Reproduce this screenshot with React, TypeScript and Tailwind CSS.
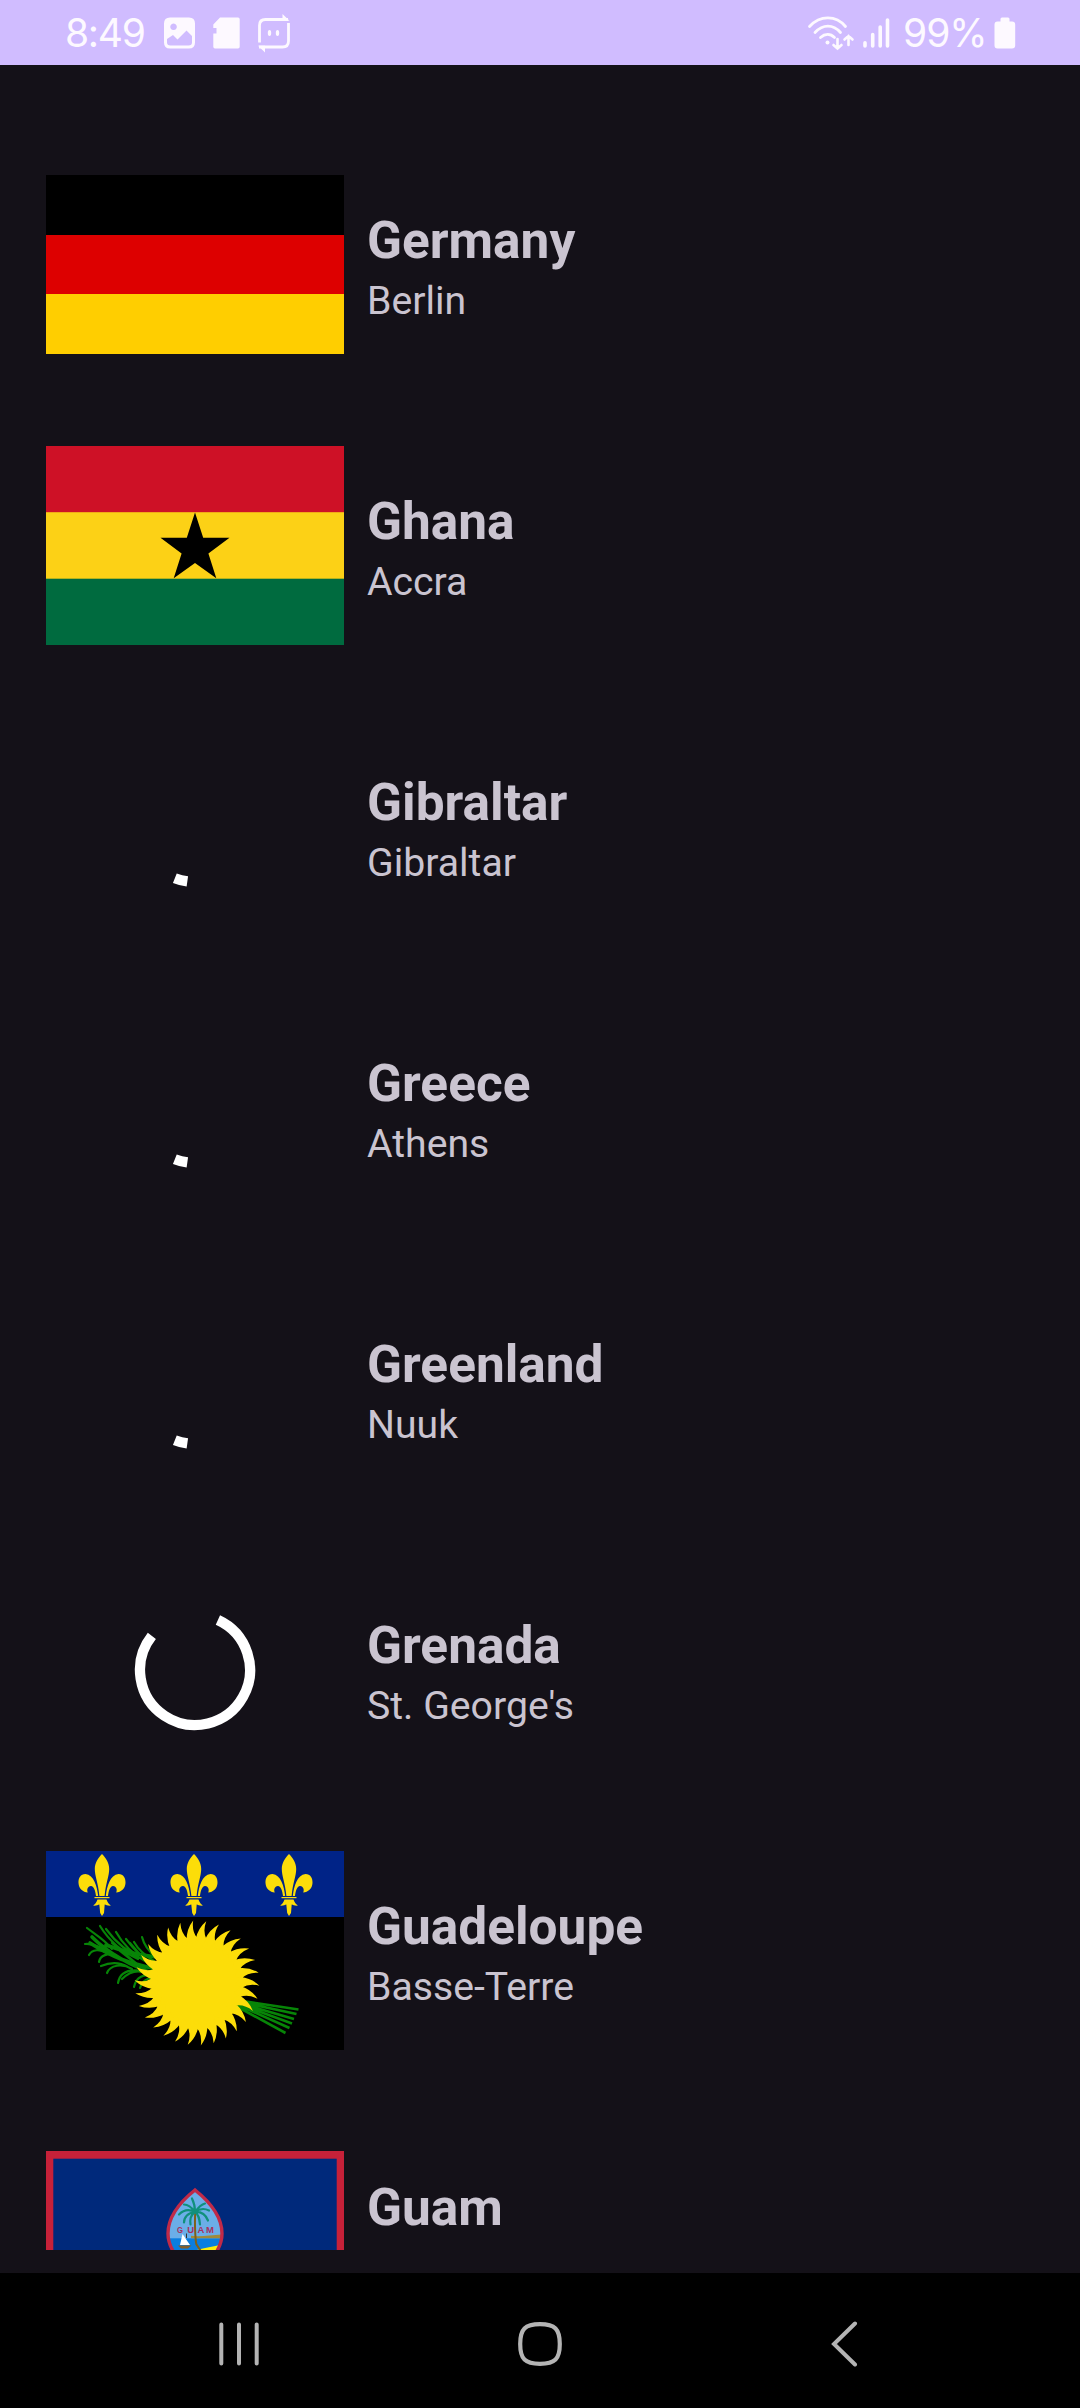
import type { ReactNode } from "react";

const SUN_CENTER = { x: 151, y: 132 };

function polar(r: number, deg: number, cx = 0, cy = 0) {
  const a = (deg * Math.PI) / 180;
  return `${(cx + r * Math.cos(a)).toFixed(2)} ${(cy + r * Math.sin(a)).toFixed(2)}`;
}

// Curved flame rays around the sun disc, tips leaning clockwise.
function sunPath() {
  const n = 30;
  const step = 360 / n;
  const { x, y } = SUN_CENTER;
  let d = "";
  for (let i = 0; i < n; i++) {
    const a = -93.5 + i * step;
    d += `M${polar(44, a - step * 0.85, x, y)} Q${polar(55, a - step * 0.62, x, y)} ${polar(62.5, a, x, y)} Q${polar(52, a - step * 0.2, x, y)} ${polar(45, a + step * 0.3, x, y)} L${polar(38, a, x, y)} Z `;
  }
  return d;
}

function Germany() {
  return (
    <div className="flex h-[179px] w-full flex-col">
      <div className="flex-1 bg-black" />
      <div className="flex-1 bg-[#dd0000]" />
      <div className="flex-1 bg-[#ffce00]" />
    </div>
  );
}

function Ghana() {
  return (
    <svg viewBox="0 0 298 199" className="block h-[199px] w-full">
      <rect width="298" height="199" fill="#006b3f" />
      <rect width="298" height="132.7" fill="#fcd116" />
      <rect width="298" height="66.2" fill="#ce1126" />
      <path d="M149 66.5 157.2 91.8H183.5L162.4 107.4 170.3 132.3 149 117 127.7 132.3 135.6 107.4 114.5 91.8H140.8Z" fill="#000" />
    </svg>
  );
}

function Lily({ x }: { x: number }) {
  return (
    <g transform={`translate(${x} 0)`} fill="#fcdd09">
      <path d="M0 3C-4 7-7.2 12-7.2 18-7.200 25-4 31-2.600 45H2.600C4 31 7.200 25 7.200 18 7.200 12 4 7 0 3Z" />
      <path d="M-3.800 45C-5 35-8 24-16.500 23-21.500 23-23.800 27-23.500 32-23.200 38-19 41-14.200 41.500-15.800 38-13.500 34.800-11 35-8 35.500-6.500 40-6 45Z" />
      <path d="M3.800 45C5 35 8 24 16.500 23 21.500 23 23.800 27 23.500 32 23.200 38 19 41 14.200 41.500 15.800 38 13.500 34.800 11 35 8 35.500 6.500 40 6 45Z" />
      <path d="M-7.500 46H7.500V47.200H-7.500Z" />
      <path d="M-4.500 48.500H4.500C5.500 51.500 7 53.500 9 54.600 6 55 4 54 2.700 53.500L2 62 0 65-1.800 62-2.700 53.500C-4 54-6 55-9 54.600-7 53.500-5.500 51.500-4.500 48.500Z" />
    </g>
  );
}

function Guadeloupe() {
  return (
    <svg viewBox="0 0 298 199" className="block h-[199px] w-full">
      <rect width="298" height="199" fill="#000" />
      <rect width="298" height="66" fill="#002387" />
      <Lily x={56} />
      <Lily x={148} />
      <Lily x={243} />
      <g fill="none" stroke="#078507" strokeLinecap="round">
        <path strokeWidth="2.600" strokeLinecap="butt" d="M190 149 252.500 158.500M190 150 250.500 163M190 151 248 168M190 152 246 172.500M190 153 243.500 177M190 155 239.500 182" />
        <path strokeWidth="3.600" d="M46 86C62 102 82 114 112 124M44 92C66 106 82 112 110 118M60 94C76 100 92 104 110 106" />
        <path strokeWidth="2.200" d="M54 75C62 88 74 100 92 108M60 78C70 92 82 102 100 110M70 81C76 92 88 104 102 112M80 88C86 96 94 106 106 112M88 91C92 98 98 104 108 110M96 86C98 94 102 100 110 106M41 77C50 84 58 88 66 98M39 93C48 92 58 98 66 104M43 104C46 98 54 98 62 102M53 111C54 104 62 102 70 104M55 115C62 112 72 110 82 116M61 122C64 114 76 112 86 118M72 132C74 120 84 118 96 120M76 128C84 120 94 118 104 124M88 136C90 126 98 122 108 126M94 137C96 130 102 126 108 128M84 92 98 108M74 100 94 116M66 92 90 112M70 106 98 118" />
      </g>
      <circle cx={SUN_CENTER.x} cy={SUN_CENTER.y} r="45" fill="#fcdd09" />
      <path d={sunPath()} fill="#fcdd09" />
    </svg>
  );
}

function Guam() {
  return (
    <svg viewBox="0 0 298 161" className="block h-[161px] w-full">
      <rect width="298" height="161" fill="#c62139" />
      <rect x="7.300" y="7.700" width="283.400" height="145.600" fill="#00297b" />
      <clipPath id="seal">
        <path d="M149 39C164 51 176 66 176 82.500S162 114 149 123C136 114 122 99 122 82.500S134 51 149 39Z" />
      </clipPath>
      <g clipPath="url(#seal)">
        <rect x="115" y="34" width="70" height="60" fill="#6baee8" />
        <rect x="115" y="87.300" width="70" height="40" fill="#0a7ee0" />
        <path d="M145 87.300V84.800C155 86 166 84 178 83.500V87.300Z" fill="#a08a3c" />
        <path d="M146 100.500C156 97 166 96.500 178 93V130H140Z" fill="#fdee0b" />
      </g>
      <path d="M149 39C164 51 176 66 176 82.500S162 114 149 123C136 114 122 99 122 82.500S134 51 149 39Z" fill="none" stroke="#c02a48" strokeWidth="3.400" />
      <path d="M149.300 61C148.500 72 149.300 88 150.300 93L156 102" fill="none" stroke="#806018" strokeWidth="2" />
      <path d="M149 61C142 57.500 137 59.500 133 63.500M149 61C142 61.500 138 66.500 138 71.500M149 61C144 64.500 144 68.500 144.500 73.500M149 61C153 63.500 153.500 68.500 154 73.500M149 61C157 60.500 160 64.500 162 69.500M149 61C155 56.500 159 57.500 163 59.500M149 61C153 55.500 155 53.500 159 52.500M149 61C149 54.500 148 51.500 146 47.500M149 61C145 55.500 142 53.500 138 53.500" fill="none" stroke="#10907c" strokeWidth="2.200" strokeLinecap="round" />
      <text y="82.400" fill="#a73260" fontFamily="Liberation Sans" fontSize="9.500" fontWeight="700">
        <tspan x="131" textLength="6" lengthAdjust="spacingAndGlyphs">G</tspan>
        <tspan x="141.300">U</tspan><tspan x="151.500">A</tspan><tspan x="160">M</tspan>
      </text>
      <path d="M136.500 83 144 94H134Z" fill="#fff" />
      <path d="M140.500 82.500V87" stroke="#333" strokeWidth="1" />
      <path d="M132 94.500H145.500L142 97.500H135Z" fill="#805e2c" />
    </svg>
  );
}

function Arc({ d }: { d: string }) {
  return (
    <svg viewBox="-60 -60 120 120" className="mx-auto block size-[120px] overflow-visible">
      <path d={d} fill="none" stroke="#fff" strokeWidth="10.300" />
    </svg>
  );
}

const tick = `M${polar(55, 98)} A55 55 0 0 1 ${polar(55, 111.5)}`;
const ring = `M${polar(55, -65.4)} A55 55 0 1 1 ${polar(55, 218.3)}`;

const countries: { name: string; capital: string; flag: ReactNode }[] = [
  { name: "Germany", capital: "Berlin", flag: <Germany /> },
  { name: "Ghana", capital: "Accra", flag: <Ghana /> },
  { name: "Gibraltar", capital: "Gibraltar", flag: <Arc d={tick} /> },
  { name: "Greece", capital: "Athens", flag: <Arc d={tick} /> },
  { name: "Greenland", capital: "Nuuk", flag: <Arc d={tick} /> },
  { name: "Grenada", capital: "St. George's", flag: <Arc d={ring} /> },
  { name: "Guadeloupe", capital: "Basse-Terre", flag: <Guadeloupe /> },
  { name: "Guam", capital: "", flag: <Guam /> },
];

function StatusBar() {
  return (
    <header className="flex h-[65px] shrink-0 items-center justify-between bg-[#d0bcff] pr-[64px] pl-[65px] text-[#fdf9ff]">
      <div className="flex items-center">
        <span className="w-[98px] font-['Inter',sans-serif] text-[39px] leading-none tracking-[-1.3px] whitespace-nowrap">8:49</span>
        <svg viewBox="0 0 128 40" className="h-[40px] w-[128px]" fill="currentColor">
          <path fillRule="evenodd" d="M7 4.500H26Q32 4.500 32 10.500V29.500Q32 35.500 26 35.500H7Q1 35.500 1 29.500V10.500Q1 4.500 7 4.500ZM10.500 10.500A3.300 3.300 0 1 0 10.600 10.500ZM4 26V29.500Q4 32.500 7.500 32.500H25.500Q29 32.500 29 29.500V23L23.500 17.500 14.500 26.500 10 22Z" />
          <path d="M57 4.500H75Q76.700 4.500 76.700 6.200V33.800Q76.700 35.500 75 35.500H52Q50.300 35.500 50.300 33.800V20.500H53.500V15H50.300V11.500Z" />
          <g fill="none" stroke="currentColor" strokeWidth="2.800">
            <path d="M96.500 29.500V12.500Q96.500 6.500 102.500 6.500H125M125.500 10V28Q125.500 34 119.500 34H96" />
          </g>
          <path d="M119.500 1 126.500 7.800H119.500ZM102 39.500 95 32.800H102Z" />
          <ellipse cx="106.500" cy="20" rx="1.700" ry="3" />
          <ellipse cx="114.500" cy="20" rx="1.700" ry="3" />
        </svg>
      </div>
      <div className="flex items-center">
        <svg viewBox="0 0 86 40" className="h-[40px] w-[86px]" fill="none" stroke="currentColor" strokeLinecap="round" strokeWidth="2.800">
          <path d="M4.500 13.500C15 2 31 2 40.500 13.500M10 19.500C18 11 28 11 35.500 19.500M15.500 24.500C20 20.500 25.500 20.500 29.500 24.500" />
          <circle cx="22.500" cy="29.500" r="2" fill="currentColor" stroke="none" />
          <path d="M32.500 26V35.500M28.500 32 32.500 35.500 36.500 32M43.500 32V23M39.500 26.500 43.500 23 47.500 26.500" strokeWidth="2.600" />
          <path d="M60 29.800V33M67.700 21.500V33M75.200 14V33M82.500 7V33" strokeWidth="3.600" />
        </svg>
        <span className="ml-[12px] w-[91px] font-['Inter',sans-serif] text-[39px] leading-none tracking-[-1px] whitespace-nowrap">99%</span>
        <svg viewBox="0 0 22 32" className="h-[32px] w-[22px]" fill="currentColor">
          <path d="M8 .5H14Q15.500 .5 15.500 2V4.500H18Q21.200 4.500 21.200 7.500V28.500Q21.200 31.500 18 31.500H3.500Q.5 31.500 .5 28.500V7.500Q.5 4.500 3.500 4.500H6.500V2Q6.500 .5 8 .5Z" />
        </svg>
      </div>
    </header>
  );
}

function NavBar() {
  return (
    <nav className="flex h-[135px] shrink-0 items-center justify-between bg-black px-[216px] pt-[6px]">
      <svg viewBox="0 0 46 46" className="size-[46px]" stroke="#b4b4b4" strokeWidth="4" strokeLinecap="round">
        <path d="M5.300 3.500V42.500M23 3.500V42.500M40.700 3.500V42.500" />
      </svg>
      <svg viewBox="0 0 46 46" className="size-[46px]" fill="none" stroke="#b4b4b4" strokeWidth="4.200">
        <path d="M23 3.200C38 3.200 42.800 8 42.800 23S38 42.800 23 42.800 3.200 38 3.200 23 8 3.200 23 3.200Z" />
      </svg>
      <svg viewBox="0 0 46 46" className="size-[46px]" fill="none" stroke="#b4b4b4" strokeWidth="4" strokeLinecap="round">
        <path d="M37 2.500 16 23 37 43.500" />
      </svg>
    </nav>
  );
}

export default function App() {
  return (
    <div className="flex h-[2408px] w-[1080px] flex-col overflow-hidden bg-[#141118] font-['Roboto',sans-serif]">
      <StatusBar />
      <main className="mb-[23px] flex min-h-0 flex-1 flex-col overflow-hidden pt-[59px]">
        {countries.map((c) => (
          <article key={c.name} className="flex h-[281px] shrink-0 items-center gap-[23px] px-[46px]">
            <div className="w-[298px] shrink-0">{c.flag}</div>
            <div className="pt-[12px] text-[#cac4d0]">
              <h2 className="text-[51.4px] leading-[60px] font-bold">{c.name}</h2>
              <p className="h-[60px] text-[39.2px] leading-[60px]">{c.capital}</p>
            </div>
          </article>
        ))}
      </main>
      <NavBar />
    </div>
  );
}
